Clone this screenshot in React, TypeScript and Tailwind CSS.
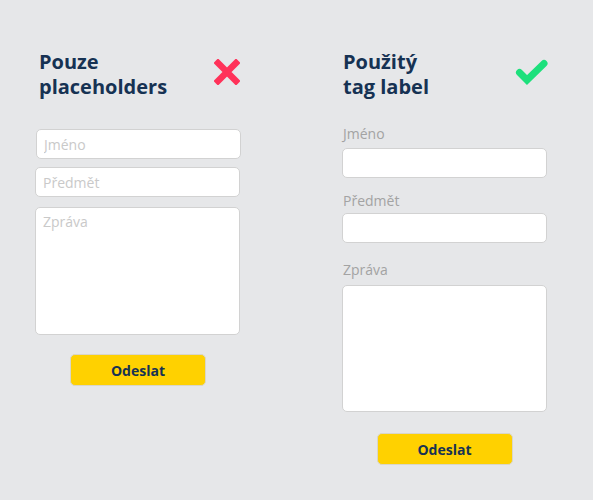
import React from "react";

const font = { fontFamily: '"Open Sans", "Noto Sans", sans-serif' };

function CrossIcon() {
  return (
    <svg width="26" height="26" viewBox="0 0 26 26" className="block">
      <path d="M4 4 L22 22 M22 4 L4 22" stroke="#ff3259" strokeWidth="6.5" strokeLinecap="square" fill="none" />
    </svg>
  );
}

function CheckIcon() {
  return (
    <svg width="34" height="26" viewBox="0 0 34 26" className="block">
      <path d="M5.5 13.5 L13 21 L30 4.5" stroke="#1de07c" strokeWidth="7" strokeLinecap="round" strokeLinejoin="miter" fill="none" />
    </svg>
  );
}

const fieldCls =
  "block w-full h-[30px] rounded-[5px] border border-[#d2d2d2] bg-white px-[7px] text-[14px] text-[#333] outline-none placeholder:text-[#c9c9c9]";
const areaCls =
  "block w-full rounded-[5px] border border-[#d2d2d2] bg-white px-[7px] pt-[3px] text-[14px] text-[#333] outline-none resize-none placeholder:text-[#c9c9c9]";
const labelCls = "block h-5 leading-5 text-[14px] text-[#a3a3a3] pl-px";
const btnCls =
  "h-[32px] w-[136px] rounded-[5px] border border-[#d9d6c8] bg-[#ffd100] text-[14px] font-bold text-[#163253]";

export default function App() {
  return (
    <div className="w-[593px] h-[500px] bg-[#e6e7e9] flex pl-[35px]" style={font}>
      {/* Form without labels */}
      <div className="w-[205px] flex flex-col">
        <div className="mt-[49px] flex justify-between items-start pl-[4px] pr-[2px]">
          <h2 className="text-[20px] leading-[25px] font-bold text-[#163253]">
            Pouze
            <br />
            placeholders
          </h2>
          <div className="mt-[10px] mr-[-2px]">
            <CrossIcon />
          </div>
        </div>
        <input className={`${fieldCls} mt-[30px] ml-px w-[204px]`} placeholder="Jméno" />
        <input className={`${fieldCls} mt-[8px] w-[204px]`} placeholder="Předmět" />
        <textarea className={`${areaCls} mt-[10px] w-[204px] h-[128px]`} placeholder="Zpráva" />
        <div className="mt-[19px] flex justify-center pl-px">
          <button className={btnCls}>Odeslat</button>
        </div>
      </div>

      {/* Form with labels */}
      <div className="ml-[102px] w-[205px] flex flex-col">
        <div className="mt-[49px] flex justify-between items-start pl-[1px]">
          <h2 className="text-[20px] leading-[25px] font-bold text-[#163253]">
            Použitý
            <br />
            tag label
          </h2>
          <div className="mt-[10px] mr-[-1px]">
            <CheckIcon />
          </div>
        </div>
        <label className={`${labelCls} mt-[25px]`}>Jméno</label>
        <input className={`${fieldCls} mt-[4px] w-[204px]`} />
        <label className={`${labelCls} mt-[13px]`}>Předmět</label>
        <input className={`${fieldCls} mt-[2px] w-[204px]`} />
        <label className={`${labelCls} mt-[17px]`}>Zpráva</label>
        <textarea className={`${areaCls} mt-[5px] w-[204px] h-[127px]`} />
        <div className="mt-[21px] flex justify-center">
          <button className={btnCls}>Odeslat</button>
        </div>
      </div>
    </div>
  );
}
